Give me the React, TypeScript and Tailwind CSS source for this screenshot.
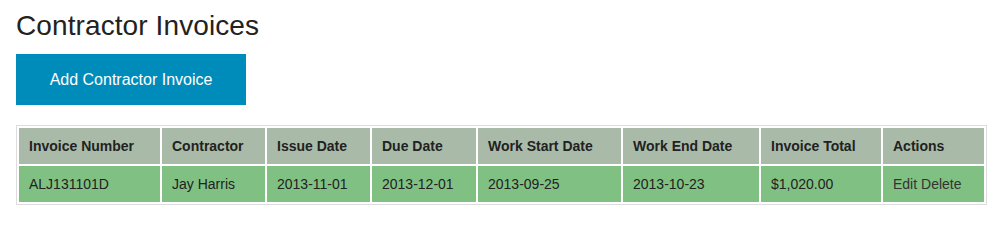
const columns = [
  { label: "Invoice Number", width: "w-[141px]" },
  { label: "Contractor", width: "w-[103px]" },
  { label: "Issue Date", width: "w-[103px]" },
  { label: "Due Date", width: "w-[104px]" },
  { label: "Work Start Date", width: "w-[143px]" },
  { label: "Work End Date", width: "w-[136px]" },
  { label: "Invoice Total", width: "w-[120px]" },
  { label: "Actions", width: "w-[101px]" },
];

const invoices = [
  {
    number: "ALJ131101D",
    contractor: "Jay Harris",
    issued: "2013-11-01",
    due: "2013-12-01",
    workStart: "2013-09-25",
    workEnd: "2013-10-23",
    total: "$1,020.00",
  },
];

export default function App() {
  return (
    <div className="min-h-screen bg-white px-4 pt-[12px] font-['Liberation_Sans',Arial,sans-serif] text-[#222]">
      <h1 className="text-[28px] leading-[28px] font-normal tracking-[0.1px]">Contractor Invoices</h1>

      <button
        type="button"
        className="mt-[14px] flex h-[51px] w-[230px] items-center justify-center bg-[#008cba] text-base text-white"
      >
        Add Contractor Invoice
      </button>

      <table className="mt-[20px] w-[971px] table-fixed border-separate border-spacing-[2px] border border-[#ddd] text-sm">
        <thead>
          <tr>
            {columns.map((col) => (
              <th
                key={col.label}
                className={`${col.width} h-[36px] bg-[#a9bba8] px-[10px] text-left align-middle font-bold`}
              >
                {col.label}
              </th>
            ))}
          </tr>
        </thead>
        <tbody>
          {invoices.map((inv) => (
            <tr key={inv.number} className="bg-[#80c183]">
              <td className="h-[36px] px-[10px]">{inv.number}</td>
              <td className="h-[36px] px-[10px]">{inv.contractor}</td>
              <td className="h-[36px] px-[10px]">{inv.issued}</td>
              <td className="h-[36px] px-[10px]">{inv.due}</td>
              <td className="h-[36px] px-[10px]">{inv.workStart}</td>
              <td className="h-[36px] px-[10px]">{inv.workEnd}</td>
              <td className="h-[36px] px-[10px]">{inv.total}</td>
              <td className="h-[36px] px-[10px] text-[#333]">
                <a href="#">Edit</a> <a href="#">Delete</a>
              </td>
            </tr>
          ))}
        </tbody>
      </table>
    </div>
  );
}
